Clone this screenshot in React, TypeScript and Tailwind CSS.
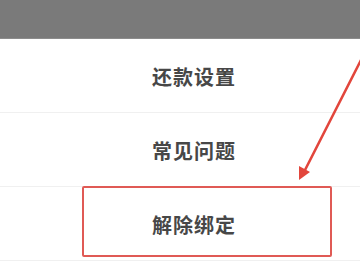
import React from "react";

const items = ["还款设置", "常见问题", "解除绑定"];

const App = () => {
  return (
    <div
      className="relative w-[360px] h-[270px] overflow-hidden bg-white"
      style={{ fontFamily: '"Noto Sans CJK SC", "Noto Sans", sans-serif' }}
    >
      <div className="h-[39px] bg-[#7a7a7a] border-b border-[#8c8c8c]"></div>
      {items.map((label) => (
        <div
          key={label}
          className="h-[74px] flex items-center justify-center pl-[28px] pt-[2px] border-b border-[#f0f0f0]"
        >
          <span className="text-[20px] font-bold text-[#474747] tracking-[1px]">
            {label}
          </span>
        </div>
      ))}

      {/* annotation box */}
      <div className="absolute left-[82px] top-[186px] w-[250px] h-[71px] border-2 border-[#e05a55] rounded-[2px]"></div>

      {/* annotation arrow */}
      <svg
        className="absolute left-0 top-0"
        width="360"
        height="270"
        viewBox="0 0 360 270"
      >
        <line
          x1="361"
          y1="60"
          x2="304"
          y2="172"
          stroke="#e2463c"
          strokeWidth="2.6"
          strokeLinecap="round"
        />
        <polygon points="299,180 299,166 310,172" fill="#e2463c" />
      </svg>
    </div>
  );
};

export default App;
